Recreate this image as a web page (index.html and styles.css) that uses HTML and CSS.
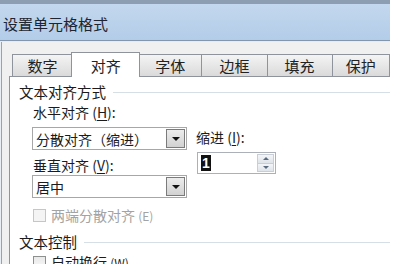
FILE: index.html
```html
<!DOCTYPE html>
<html lang="zh-CN">
<head>
<meta charset="utf-8">
<title>设置单元格格式</title>
<link rel="stylesheet" href="styles.css">
</head>
<body>
<div class="window">
  <div class="titlebar"><span class="title">设置单元格格式</span></div>
  <div class="frame">
    <div class="tabs">
      <div class="tab">数字</div>
      <div class="tab active">对齐</div>
      <div class="tab">字体</div>
      <div class="tab">边框</div>
      <div class="tab">填充</div>
      <div class="tab last">保护</div>
    </div>
    <div class="panel">
      <div class="group">
        <span class="group-label">文本对齐方式</span>
        <span class="etch"></span>
      </div>
      <div class="align-row">
        <div class="col-left">
          <div class="label">水平对齐 (<u>H</u>):</div>
          <div class="combo">
            <span class="combo-text">分散对齐（缩进）</span>
            <span class="combo-btn"><span class="tri"></span></span>
          </div>
          <div class="label label2">垂直对齐 (<u>V</u>):</div>
          <div class="combo combo2">
            <span class="combo-text">居中</span>
            <span class="combo-btn"><span class="tri"></span></span>
          </div>
        </div>
        <div class="col-right">
          <div class="label">缩进 (<u>I</u>):</div>
          <div class="spin">
            <span class="spin-val">1</span>
            <span class="spin-btns">
              <span class="spin-up"><span class="tri-up"></span></span>
              <span class="spin-down"><span class="tri-down"></span></span>
            </span>
          </div>
        </div>
      </div>
      <div class="check-row disabled">
        <span class="box"></span>
        <span class="check-label">两端分散对齐 <span class="latin">(E)</span></span>
      </div>
      <div class="group group2">
        <span class="group-label">文本控制</span>
        <span class="etch"></span>
      </div>
      <div class="check-row">
        <span class="box"></span>
        <span class="check-label">自动换行 <span class="latin">(<u>W</u>)</span></span>
      </div>
    </div>
  </div>
</div>
</body>
</html>
```

FILE: styles.css
```css
html, body {
  margin: 0;
  padding: 0;
  background: #ffffff;
}
body {
  font-family: "Noto Sans CJK SC", "Noto Sans", sans-serif;
  color: #1b1b1b;
}
.window {
  width: 390px;
  height: 264px;
  overflow: hidden;
  display: flex;
  flex-direction: column;
}
.titlebar {
  flex-shrink: 0;
  height: 36px;
  border-top: 4px solid #8d9db2;
  border-bottom: 1px solid #8396ad;
  background: linear-gradient(#c3d8ee, #b3cce8);
  display: flex;
  align-items: center;
  padding-left: 3px;
}
.title {
  font-size: 15px;
  line-height: 20px;
  color: #1e2530;
  margin-top: 4px;
}
.frame {
  flex: 1;
  min-height: 0;
  background: #f0f0f0;
  border-top: 1px solid #e4ebf3;
  border-left: 1px solid #e8eef4;
  box-shadow: inset 1px 0 0 #9aa3ad;
  padding-left: 8px;
  display: flex;
  flex-direction: column;
}
.tabs {
  flex-shrink: 0;
  display: flex;
  align-items: flex-end;
  margin-top: 9px;
  padding-left: 3px;
  height: 25px;
  position: relative;
  z-index: 1;
}
.tab {
  height: 22px;
  width: 62px;
  box-sizing: border-box;
  border: 1px solid #8e939c;
  border-bottom: none;
  border-right: none;
  background: linear-gradient(#f4f4f4, #dadada);
  font-size: 15px;
  line-height: 22px;
  text-align: center;
  color: #222;
}
.tab.active {
  height: 25px;
  width: 71px;
  margin: 0 -1px 0 -1px;
  background: #ffffff;
  border-right: 1px solid #8e939c;
  line-height: 25px;
  position: relative;
  top: 1px;
  z-index: 2;
}
.tab.active + .tab {
  border-left: none;
  width: 64px;
}
.tab:nth-child(4) { width: 67px; }
.tab:nth-child(5) { width: 67px; }
.tab.last { width: 60px; border-right: 1px solid #8e939c; }
.panel {
  flex: 1;
  min-height: 0;
  background: #ffffff;
  border: 1px solid #8e939c;
  border-right: none;
  border-bottom: none;
  padding-top: 5px;
}
.group {
  display: flex;
  align-items: center;
  height: 20px;
  padding-left: 9px;
}
.group-label {
  font-size: 14.5px;
  line-height: 20px;
  white-space: nowrap;
}
.etch {
  flex: 1;
  height: 0;
  border-top: 1px solid #d5dfe5;
  border-bottom: 1px solid #ffffff;
  margin-left: 7px;
  margin-top: 2px;
}
.align-row {
  display: flex;
  padding-left: 22px;
}
.col-left {
  width: 155px;
  flex-shrink: 0;
}
.label {
  font-size: 14px;
  line-height: 20px;
  white-space: nowrap;
  padding-left: 1px;
}
.label u { text-decoration-thickness: 1px; text-underline-offset: 2px; }
.combo {
  margin-top: 5px;
  height: 23px;
  box-sizing: border-box;
  border: 1px solid #a7a7a7;
  background: #ffffff;
  display: flex;
  align-items: center;
}
.combo-text {
  flex: 1;
  font-size: 14px;
  padding-left: 3px;
  white-space: nowrap;
}
.label2 { margin-top: 5px; }
.combo2 { margin-top: 0; }
.combo-btn {
  width: 19px;
  height: 19px;
  margin-right: 1px;
  box-sizing: border-box;
  border: 1px solid #7b7b7b;
  background: linear-gradient(#ececec, #d2d2d2);
  display: flex;
  align-items: center;
  justify-content: center;
}
.tri {
  width: 0;
  height: 0;
  border-left: 4px solid transparent;
  border-right: 4px solid transparent;
  border-top: 4px solid #111;
}
.col-right {
  margin-left: 8px;
  padding-top: 25px;
}
.spin {
  margin-top: 5px;
  margin-left: 2px;
  width: 79px;
  height: 22px;
  box-sizing: border-box;
  border: 1px solid #acb0b8;
  display: flex;
  align-items: center;
}
.spin-val {
  margin-left: 3px;
  background: #111;
  color: #fff;
  font-family: "Liberation Sans", sans-serif;
  font-size: 14px;
  font-weight: bold;
  line-height: 16px;
  padding: 0 1px;
}
.spin-btns {
  margin-left: auto;
  margin-right: 1px;
  width: 17px;
  height: 18px;
  display: flex;
  flex-direction: column;
}
.spin-up, .spin-down {
  flex: 1;
  box-sizing: border-box;
  border: 1px solid #c9ced6;
  background: linear-gradient(#f3f5f8, #dfe4ea);
  display: flex;
  align-items: center;
  justify-content: center;
}
.spin-down { border-top: none; }
.tri-up, .tri-down {
  width: 0;
  height: 0;
  border-left: 3px solid transparent;
  border-right: 3px solid transparent;
}
.tri-up { border-bottom: 3px solid #5a6b80; }
.tri-down { border-top: 3px solid #5a6b80; }
.check-row {
  display: flex;
  align-items: center;
  height: 20px;
  margin-top: 7px;
  padding-left: 23px;
}
.box {
  width: 13px;
  height: 13px;
  box-sizing: border-box;
  border: 1px solid #8e8f8f;
  background: linear-gradient(#e9e9e9, #f8f8f8);
}
.check-row.disabled .box {
  border-color: #c6c6c6;
  background: #f4f4f4;
}
.check-label {
  margin-left: 5px;
  font-size: 14px;
  line-height: 20px;
  white-space: nowrap;
}
.check-row.disabled .check-label { color: #a3a3a3; }
.latin { font-size: 12px; }
.group2 { margin-top: 7px; }
.group2 + .check-row { margin-top: 0; }
```
